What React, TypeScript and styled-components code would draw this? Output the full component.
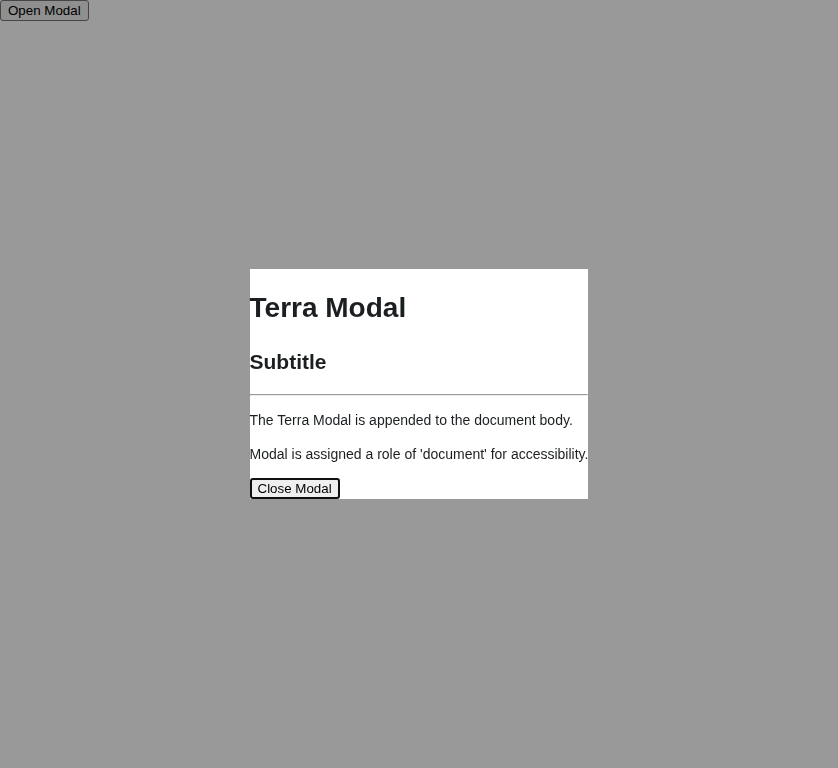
import styled, { createGlobalStyle } from "styled-components";

const GlobalStyle = createGlobalStyle`
  body {
    margin: 0;
    font-family: "Liberation Sans", Arial, sans-serif;
    font-size: 14px;
    line-height: 1.43;
    color: #1c1f21;
  }
`;

const Button = styled.button<{ focused?: boolean }>`
  font-family: "Liberation Sans", Arial, sans-serif;
  font-size: 13.33px;
  line-height: normal;
  height: 21px;
  margin: 0;
  color: #000;
  background: #efefef;
  border-style: solid;
  border-width: ${({ focused }) => (focused ? "2px" : "1px")};
  border-color: ${({ focused }) => (focused ? "#101010" : "#767676")};
  border-radius: 3px;
  padding: ${({ focused }) => (focused ? "1px 6px" : "1px 7px")};
`;

const Overlay = styled.div`
  position: fixed;
  inset: 0;
  background: rgba(0, 0, 0, 0.4);
  display: flex;
  align-items: center;
  justify-content: center;
`;

const Dialog = styled.div`
  background: #fff;
  width: max-content;
  display: flex;
  flex-direction: column;
  align-items: flex-start;
`;

const Header = styled.div`
  display: flow-root;
  align-self: stretch;
`;

const Title = styled.h1`
  font-size: 28px;
  margin: 18.76px 0;
`;

const Subtitle = styled.h2`
  font-size: 21px;
  margin: 17.43px 0;
`;

const Divider = styled.hr`
  align-self: stretch;
  margin: 0;
`;

const Body = styled.div`
  display: flow-root;
`;

const Text = styled.p`
  margin: 14px 0;
`;

export default function App() {
  return (
    <>
      <GlobalStyle />
      <Button>Open Modal</Button>
      <Overlay>
        <Dialog role="document">
          <Header>
            <Title>Terra Modal</Title>
            <Subtitle>Subtitle</Subtitle>
          </Header>
          <Divider />
          <Body>
            <Text>The Terra Modal is appended to the document body.</Text>
            <Text>Modal is assigned a role of 'document' for accessibility.</Text>
          </Body>
          <Button focused>Close Modal</Button>
        </Dialog>
      </Overlay>
    </>
  );
}
